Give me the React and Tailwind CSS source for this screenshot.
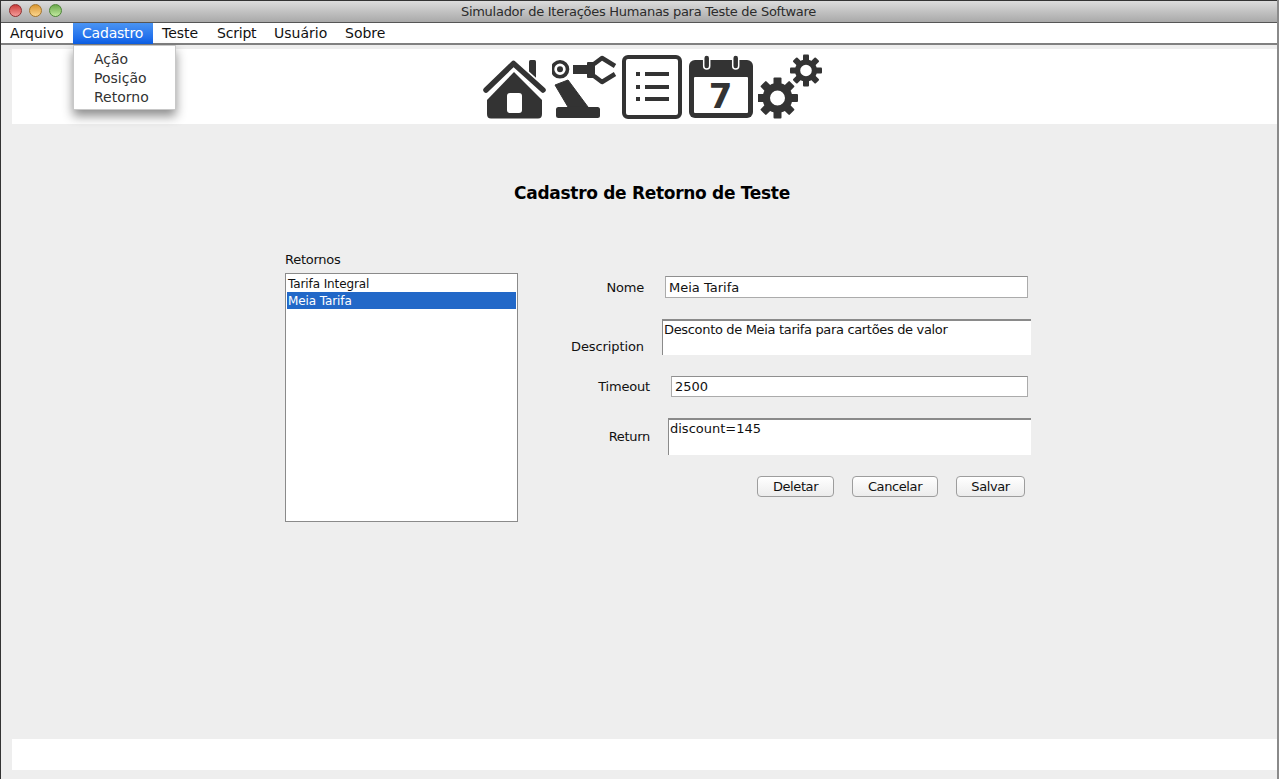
const font = { fontFamily: '"DejaVu Sans", sans-serif' };

const menus = [
  { label: 'Arquivo', className: 'w-[72px] pl-[9px]' },
  { label: 'Cadastro', className: 'w-[80px] pl-[9px] tracking-[-0.2px] text-white bg-gradient-to-b from-[#4a94f3] to-[#0b5fe8]' },
  { label: 'Teste', className: 'w-[54px] pl-[9px]' },
  { label: 'Script', className: 'w-[57px] pl-[10px] tracking-[-0.2px]' },
  { label: 'Usuário', className: 'w-[71px] pl-[10px]' },
  { label: 'Sobre', className: 'pl-[10px]' },
];

function Gear({ cx, cy, ring, hole, tooth, reach }) {
  const angles = [0, 45, 90, 135, 180, 225, 270, 315];
  return (
    <g>
      {angles.map((a) => (
        <rect key={a} x={cx - tooth / 2} y={cy - reach} width={tooth} height={reach - ring + 2} rx="1" fill="#333" transform={`rotate(${a} ${cx} ${cy})`} />
      ))}
      <circle cx={cx} cy={cy} r={(ring + hole) / 2} fill="none" stroke="#333" strokeWidth={ring - hole} />
    </g>
  );
}

function HomeIcon() {
  return (
    <svg width="65" height="64" viewBox="0 0 65 64" className="ml-[481px] shrink-0">
      <rect x="47" y="3" width="7" height="24" rx="1.5" fill="#333" />
      <polyline points="4,33 31.5,6.5 61,33" fill="none" stroke="#fff" strokeWidth="9" strokeLinecap="round" strokeLinejoin="round" />
      <polyline points="4,33 31.5,6.5 61,33" fill="none" stroke="#333" strokeWidth="5.5" strokeLinecap="round" strokeLinejoin="round" />
      <path d="M5 43 L32 15 L60 43 V57 Q60 61.5 56 61.5 H9 Q5 61.5 5 57 Z" fill="#333" />
      <rect x="25" y="36" width="15" height="20" rx="3" fill="#fff" />
    </svg>
  );
}

function RobotIcon() {
  return (
    <svg width="66" height="66" viewBox="0 0 66 66" className="ml-[5px] -mt-[3px] shrink-0">
      <circle cx="8" cy="15.3" r="7.5" fill="none" stroke="#333" strokeWidth="3.6" />
      <circle cx="8" cy="15.3" r="3" fill="#333" />
      <path d="M3 31 L16 26 L36 53 L16 53 Z" fill="#333" stroke="#333" strokeWidth="1" strokeLinejoin="round" />
      <rect x="4" y="53" width="44" height="11" rx="2.5" fill="#333" />
      <rect x="21" y="11" width="14" height="9" fill="#333" />
      <rect x="35" y="8" width="8" height="16" rx="1" fill="#333" />
      <polyline points="42,10 50,4 63,12" fill="none" stroke="#333" strokeWidth="4.5" strokeLinejoin="round" />
      <polyline points="42,22 50,28 63,20" fill="none" stroke="#333" strokeWidth="4.5" strokeLinejoin="round" />
    </svg>
  );
}

function ListIcon() {
  return (
    <svg width="60" height="64" viewBox="0 0 60 64" className="ml-[4px] -mt-[2px] shrink-0">
      <rect x="2" y="2" width="56" height="60" rx="4" fill="none" stroke="#333" strokeWidth="4" />
      {[19, 32, 44].map((y) => (
        <g key={y} fill="#333">
          <rect x="14" y={y - 2} width="4" height="4" />
          <rect x="23" y={y - 2} width="24" height="4" />
        </g>
      ))}
    </svg>
  );
}

function CalendarIcon() {
  return (
    <svg width="64" height="66" viewBox="0 0 64 66" className="ml-[7px] -mt-[3px] shrink-0">
      <rect x="0" y="6" width="64" height="58" rx="6" fill="#333" />
      <rect x="5" y="23" width="54" height="36" rx="1" fill="#fff" />
      {[17.7, 46.7].map((x) => (
        <rect key={x} x={x - 3} y="1" width="6" height="14" rx="3" fill="#333" stroke="#fff" strokeWidth="1.5" />
      ))}
      <text x="31.5" y="54" textAnchor="middle" fontSize="34" fontWeight="700" fill="#333" style={font}>7</text>
    </svg>
  );
}

function GearsIcon() {
  return (
    <svg width="66" height="66" viewBox="0 0 66 66" className="ml-[5px] -mt-[3px] shrink-0">
      <Gear cx={19.5} cy={44} ring={15} hole={7.5} tooth={8} reach={20.5} />
      <Gear cx={48} cy={16.5} ring={11} hole={5.8} tooth={6} reach={16} />
    </svg>
  );
}

function Field({ label, labelWidth, inputWidth, gap, value, height }) {
  return (
    <div className="flex items-center" style={{ height }}>
      <span className="text-right shrink-0 pt-[1px] tracking-[-0.2px]" style={{ width: labelWidth }}>{label}</span>
      <input
        readOnly
        value={value}
        style={{ marginLeft: gap, width: inputWidth }}
        className="h-full bg-white border border-[#ababab] border-t-[#8f8f8f] px-[3px] outline-none"
      />
    </div>
  );
}

function Area({ label, labelWidth, inputWidth, gap, height, value, labelClass, inputClass }) {
  return (
    <div className="flex" style={{ height }}>
      <span className={`text-right shrink-0 ${labelClass}`} style={{ width: labelWidth }}>{label}</span>
      <textarea
        readOnly
        value={value}
        style={{ marginLeft: gap, width: inputWidth }}
        className={`h-full bg-white border-t-2 border-l border-[#8a8a8a] pl-[1px] pt-[1px] leading-[15px] resize-none outline-none ${inputClass}`}
      />
    </div>
  );
}

function Button({ children, className }) {
  return (
    <button className={`h-[21px] bg-gradient-to-b from-white to-[#ececec] border border-[#9d9d9d] rounded-[4px] text-[13px] tracking-[-0.4px] leading-none ${className}`}>
      {children}
    </button>
  );
}

export default function App() {
  return (
    <div className="relative h-[779px] w-full overflow-hidden bg-[#eeeeee] text-[13px] text-[#111] flex flex-col border-l border-[#333] border-r-2 border-r-[#8a8a8a]" style={font}>
      <div className="h-[23px] shrink-0 border-t border-t-[#333] border-b border-b-[#555] bg-gradient-to-b from-[#dcdcdc] to-[#a9a9a9] flex items-center relative">
        <div className="flex gap-[7px] pl-[8px] absolute left-0 top-[3px]">
          <span className="w-[13px] h-[13px] rounded-full border border-[#8f2d2d] bg-gradient-to-b from-[#c93a3a] to-[#f49a9a]" />
          <span className="w-[13px] h-[13px] rounded-full border border-[#a5752a] bg-gradient-to-b from-[#d9962b] to-[#fbd68d]" />
          <span className="w-[13px] h-[13px] rounded-full border border-[#4c8536] bg-gradient-to-b from-[#69a84a] to-[#c2ea9f]" />
        </div>
        <div className="w-full text-center text-[13px] tracking-[-0.27px] text-[#2b2b2b] pr-[1px]">Simulador de Iterações Humanas para Teste de Software</div>
      </div>

      <div className="h-[22px] shrink-0 bg-white border-b-2 border-b-[#808080] flex text-[14px] text-[#111] leading-[20px]">
        {menus.map((m) => (
          <div key={m.label} className={`h-[21px] ${m.className}`}>{m.label}</div>
        ))}
      </div>

      <div className="absolute z-10 left-[72px] top-[45px] w-[103px] h-[65px] bg-white border border-[#c8c8c8] shadow-[0_6px_10px_rgba(0,0,0,0.45)] pl-[20px] pt-[4px] text-[14px] leading-[19px] text-[#333]">
        <div>Ação</div>
        <div>Posição</div>
        <div>Retorno</div>
      </div>

      <div className="h-[75px] shrink-0 mt-[4px] ml-[11px] bg-white flex items-start pt-[8px]">
        <div className="flex -ml-[11px]">
          <HomeIcon />
          <RobotIcon />
          <ListIcon />
          <CalendarIcon />
          <GearsIcon />
        </div>
      </div>

      <div className="flex-1 flex flex-col">
        <h1 className="mt-[57px] text-center text-[17px] tracking-[-0.3px] font-bold leading-[24px] text-black pl-[26px]">Cadastro de Retorno de Teste</h1>

        <div className="flex mt-[46px] pl-[284px]">
          <div className="w-[233px] shrink-0">
            <div className="h-[18px] leading-[18px] tracking-[-0.25px]">Retornos</div>
            <div className="mt-[4px] h-[249px] bg-white border border-[#8a8a8a] p-[1px] text-[12px] tracking-[-0.1px] leading-[17px]">
              <div className="pl-[1px] pt-[1px] h-[17px] leading-[16px]">Tarifa Integral</div>
              <div className="pl-[1px] pt-[1px] h-[17px] leading-[16px] text-white bg-[#2268c8]">Meia Tarifa</div>
            </div>
          </div>

          <div className="flex-1 pt-[25px]">
            <Field label="Nome" labelWidth={126} gap={21} inputWidth={363} height={22} value="Meia Tarifa" />
            <div className="mt-[21px]">
              <Area label="Description" labelWidth={126} gap={18} inputWidth={369} height={36} labelClass="pt-[18px] tracking-[-0.1px]" inputClass="tracking-[-0.33px]" value="Desconto de Meia tarifa para cartões de valor" />
            </div>
            <div className="mt-[21px]">
              <Field label="Timeout" labelWidth={132} gap={21} inputWidth={357} height={21} value="2500" />
            </div>
            <div className="mt-[21px]">
              <Area label="Return" labelWidth={132} gap={18} inputWidth={363} height={37} labelClass="pt-[9px] tracking-[-0.3px]" value="discount=145" />
            </div>
            <div className="flex mt-[21px] pl-[239px] gap-[18px]">
              <Button className="w-[77px]">Deletar</Button>
              <Button className="w-[86px]">Cancelar</Button>
              <Button className="w-[69px]">Salvar</Button>
            </div>
          </div>
        </div>
      </div>

      <div className="h-[31px] shrink-0 ml-[11px] mb-[9px] bg-white" />
    </div>
  );
}
